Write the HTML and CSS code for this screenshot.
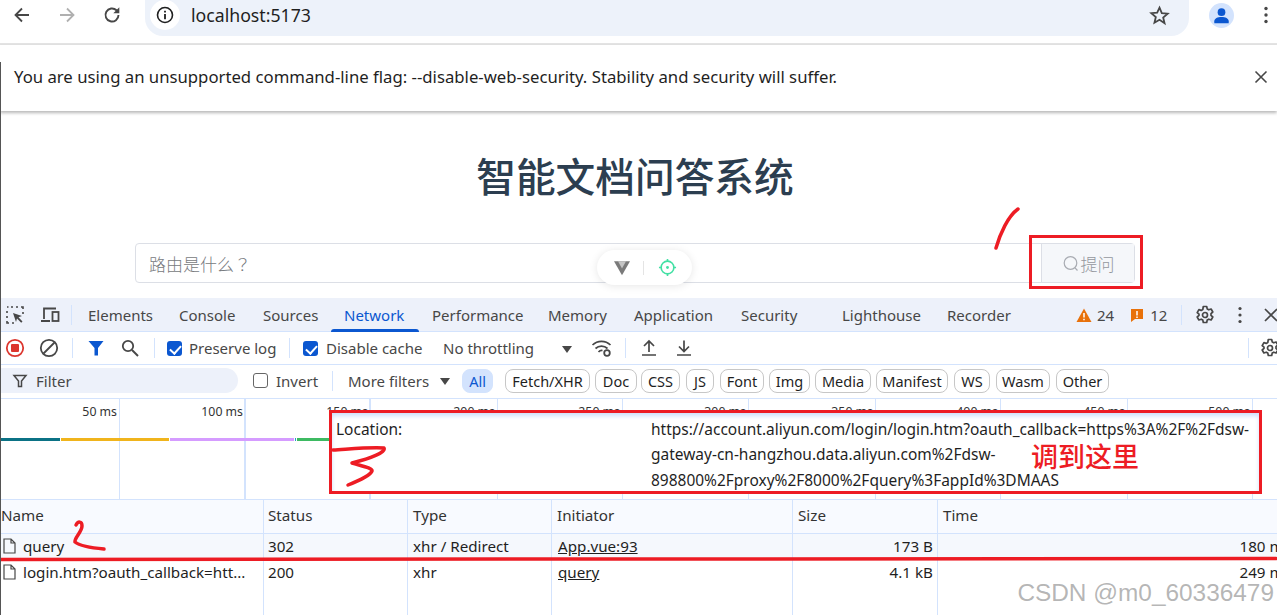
FILE: index.html
```html
<!DOCTYPE html>
<html lang="zh">
<head>
<meta charset="utf-8">
<title>智能文档问答系统</title>
<link rel="stylesheet" href="styles.css">
</head>
<body>
<div class="screen">
  <header class="chrome">
    <svg class="ic nav-back" viewBox="0 0 20 20"><path d="M17 10H4M10 3.500 3.500 10l6.500 6.500" fill="none" stroke="#474747" stroke-width="1.800"/></svg>
    <svg class="ic nav-fwd" viewBox="0 0 20 20"><path d="M3 10h13M10 3.500l6.500 6.500-6.500 6.500" fill="none" stroke="#b0b0b0" stroke-width="1.800"/></svg>
    <svg class="ic nav-reload" viewBox="0 0 20 20"><path d="M16.500 10a6.500 6.500 0 1 1-2-4.700L16.500 7.300" fill="none" stroke="#474747" stroke-width="1.900"/><path d="M17.300 2.300v6h-6z" fill="#474747"/></svg>
    <div class="omnibox">
      <span class="site-info"><svg class="ic" viewBox="0 0 20 20"><circle cx="10" cy="10" r="7.500" fill="none" stroke="#1f1f1f" stroke-width="1.600"/><path d="M10 9v5.200M10 5.700v1.700" stroke="#1f1f1f" stroke-width="1.800"/></svg></span>
      <span class="url">localhost:5173</span>
      <svg class="ic star" viewBox="0 0 20 20"><path d="m10 2.500 2.200 5.200 5.600.5-4.300 3.700 1.300 5.500L10 14l-4.800 2.900 1.300-5.500-4.300-3.700 5.600-.5z" fill="none" stroke="#474747" stroke-width="1.700"/></svg>
    </div>
    <span class="avatar"><svg viewBox="0 0 26 26"><circle cx="13" cy="9.500" r="4" fill="#0b57d0"/><path d="M5.500 21v-2c0-3 3.500-4.500 7.500-4.500s7.500 1.500 7.500 4.500v2z" fill="#0b57d0"/></svg></span>
    <svg class="ic kebab" viewBox="0 0 6 20"><circle cx="3" cy="3.500" r="1.700" fill="#474747"/><circle cx="3" cy="10" r="1.700" fill="#474747"/><circle cx="3" cy="16.500" r="1.700" fill="#474747"/></svg>
  </header>

  <div class="infobar">
    <span>You are using an unsupported command-line flag: --disable-web-security. Stability and security will suffer.</span>
    <svg class="ic info-close" viewBox="0 0 14 14"><path d="m1.500 1.500 11 11m0-11-11 11" stroke="#474747" stroke-width="1.600"/></svg>
  </div>

  <main class="page">
    <h1 class="title">智能文档问答系统</h1>
    <div class="ask">
      <div class="ask-input">路由是什么<span class="ask-q">？</span></div>
      <div class="ask-btn">
        <svg class="ask-icon" viewBox="0 0 18 18"><circle cx="8.500" cy="8" r="6.300" fill="none" stroke="#a8abb2" stroke-width="1.200"/><path d="m13 12.800 2.500 2.700" stroke="#a8abb2" stroke-width="1.200"/></svg>提问
      </div>
    </div>
  </main>

  <section class="devtools">
    <nav class="dt-tabs">
      <svg class="ic dt-inspect" viewBox="0 0 20 20"><path d="M2 2h1.500M6 2h2M11 2h2M16 2h2v2M2 6v2M2 11v2M2 16v2h2M7 18h2M18 7v2" stroke="#474747" stroke-width="1.600" fill="none"/><path d="m8 8 9 3-3.500 1.200 4 4.300-1.300 1.300-4.200-4.200L11 17z" fill="#474747"/></svg>
      <svg class="ic dt-device" viewBox="0 0 22 20"><path d="M5 14V3.500h12M2 16h9" stroke="#474747" stroke-width="1.800" fill="none"/><rect x="13.500" y="7" width="6" height="9" fill="none" stroke="#474747" stroke-width="1.800"/></svg>
      <span class="vsep tabs-sep"></span>
      <span class="tab t-elements">Elements</span>
      <span class="tab t-console">Console</span>
      <span class="tab t-sources">Sources</span>
      <span class="tab t-network active">Network</span>
      <span class="tab t-perf">Performance</span>
      <span class="tab t-memory">Memory</span>
      <span class="tab t-app">Application</span>
      <span class="tab t-security">Security</span>
      <span class="tab t-light">Lighthouse</span>
      <span class="tab t-recorder">Recorder</span>
      <span class="issues">
        <svg class="ic-s" viewBox="0 0 16 16"><path d="M8 1.500 15.500 15H.5z" fill="#e8710a"/><path d="M8 6v4.500M8 11.800v1.500" stroke="#fff" stroke-width="1.500"/></svg><span>24</span>
        <svg class="ic-s issue-b" viewBox="0 0 16 16"><path d="M2 2h12v10H6l-4 3z" fill="#e8710a"/><path d="M8 4v4.500M8 9.500V11" stroke="#fff" stroke-width="1.500"/></svg><span>12</span>
      </span>
      <span class="vsep issues-sep"></span>
      <svg class="ic gear-top" viewBox="0 0 20 20"><use href="#gear"/></svg>
      <svg class="ic dt-kebab" viewBox="0 0 6 20"><circle cx="3" cy="3.500" r="1.600" fill="#474747"/><circle cx="3" cy="10" r="1.600" fill="#474747"/><circle cx="3" cy="16.500" r="1.600" fill="#474747"/></svg>
      <svg class="ic dt-close" viewBox="0 0 14 14"><path d="m1 1 12 12m0-12L1 13" stroke="#474747" stroke-width="1.700"/></svg>
    </nav>

    <div class="dt-bar">
      <svg class="ic rec" viewBox="0 0 20 20"><circle cx="10" cy="10" r="8.200" fill="none" stroke="#dc362e" stroke-width="1.800"/><rect x="6" y="6" width="8" height="8" rx="1" fill="#dc362e"/></svg>
      <svg class="ic clear" viewBox="0 0 20 20"><circle cx="10" cy="10" r="8.200" fill="none" stroke="#474747" stroke-width="1.800"/><path d="M15.500 4.500l-11 11" stroke="#474747" stroke-width="1.800"/></svg>
      <span class="vsep bar-sep1"></span>
      <svg class="ic funnel" viewBox="0 0 18 18"><path d="M1.500 2h15l-5.500 7v7.500H7.500V9z" fill="#0b57d0"/></svg>
      <svg class="ic search" viewBox="0 0 20 20"><circle cx="8" cy="8" r="5.200" fill="none" stroke="#474747" stroke-width="1.800"/><path d="m12 12 6 6" stroke="#474747" stroke-width="2"/></svg>
      <span class="vsep bar-sep2"></span>
      <span class="check on c-preserve"></span><span class="lbl l-preserve">Preserve log</span>
      <span class="vsep bar-sep3"></span>
      <span class="check on c-cache"></span><span class="lbl l-cache">Disable cache</span>
      <span class="lbl l-throttle">No throttling</span>
      <span class="caret c-throttle"></span>
      <svg class="ic wifi" viewBox="0 0 22 20"><path d="M1.500 7a13 13 0 0 1 18 0M4.500 10.500a9 9 0 0 1 12 0M7.500 14a4.500 4.500 0 0 1 4-1.500" fill="none" stroke="#474747" stroke-width="1.700"/><circle cx="16" cy="15" r="2.800" fill="none" stroke="#474747" stroke-width="1.800"/></svg>
      <span class="vsep bar-sep4"></span>
      <svg class="ic up" viewBox="0 0 18 18"><path d="M9 13V2.500M4 7l5-5 5 5M2 16h14" fill="none" stroke="#474747" stroke-width="1.700"/></svg>
      <svg class="ic down" viewBox="0 0 18 18"><path d="M9 1.500V12M4 7.500l5 5 5-5M2 16h14" fill="none" stroke="#474747" stroke-width="1.700"/></svg>
      <span class="vsep bar-sep5"></span>
      <svg class="ic gear-bar" viewBox="0 0 20 20"><use href="#gear"/></svg>
    </div>

    <div class="dt-filter">
      <div class="filter-box">
        <svg class="ic-s" viewBox="0 0 16 16"><path d="M2 2.500h12L9.500 8v5.500h-3V8z" fill="none" stroke="#474747" stroke-width="1.500"/></svg>
        <span>Filter</span>
      </div>
      <span class="check c-invert"></span><span class="lbl l-invert">Invert</span>
      <span class="vsep filter-sep"></span>
      <span class="lbl l-more">More filters</span><span class="caret c-more"></span>
      <div class="chips">
        <span class="chip all">All</span>
        <span class="chip c1">Fetch/XHR</span>
        <span class="chip c2">Doc</span>
        <span class="chip c3">CSS</span>
        <span class="chip c4">JS</span>
        <span class="chip c5">Font</span>
        <span class="chip c6">Img</span>
        <span class="chip c7">Media</span>
        <span class="chip c8">Manifest</span>
        <span class="chip c9">WS</span>
        <span class="chip c10">Wasm</span>
        <span class="chip c11">Other</span>
      </div>
    </div>

    <div class="timeline">
      <div class="tl-cell">50 ms</div>
      <div class="tl-cell thick">100 ms</div>
      <div class="tl-cell thick">150 ms</div>
      <div class="tl-cell">200 ms</div>
      <div class="tl-cell">250 ms</div>
      <div class="tl-cell">300 ms</div>
      <div class="tl-cell">350 ms</div>
      <div class="tl-cell">400 ms</div>
      <div class="tl-cell">450 ms</div>
      <div class="tl-cell">500 ms</div>
      <div class="tl-bars">
        <span class="bar b-teal"></span><span class="bar b-yellow"></span><span class="bar b-purple"></span><span class="bar b-blue"></span><span class="bar b-green"></span>
      </div>
    </div>

    <div class="table">
      <div class="row head">
        <div class="cell">Name</div><div class="cell c-status">Status</div><div class="cell">Type</div><div class="cell">Initiator</div><div class="cell">Size</div><div class="cell">Time</div>
      </div>
      <div class="row even">
        <div class="cell name"><svg class="doc" viewBox="0 0 14 16"><path d="M1.500 1h7l4 4v10h-11z M8.500 1v4h4" fill="none" stroke="#474747" stroke-width="1.200"/></svg>query</div>
        <div class="cell c-status">302</div><div class="cell">xhr / Redirect</div><div class="cell link">App.vue:93</div><div class="cell right">173 B</div><div class="cell right time">180 ms</div>
      </div>
      <div class="row">
        <div class="cell name"><svg class="doc" viewBox="0 0 14 16"><path d="M1.500 1h7l4 4v10h-11z M8.500 1v4h4" fill="none" stroke="#474747" stroke-width="1.200"/></svg>login.htm?oauth_callback=htt...</div>
        <div class="cell c-status">200</div><div class="cell">xhr</div><div class="cell link">query</div><div class="cell right">4.1 kB</div><div class="cell right time">249 ms</div>
      </div>
      <div class="row filler">
        <div class="cell"></div><div class="cell"></div><div class="cell"></div><div class="cell"></div><div class="cell"></div><div class="cell"></div>
      </div>
    </div>
  </section>

  <div class="pill">
    <svg class="pill-vue" viewBox="0 0 22 20"><path d="M1 1.500h20L11 19z" fill="#7a7a7a"/><path d="M6 1.500h10l-5 9z" fill="#c4c4c4"/></svg>
    <span class="pill-sep"></span>
    <svg class="pill-target" viewBox="0 0 20 20"><circle cx="10" cy="10" r="6.700" fill="none" stroke="#42e0a4" stroke-width="1.700"/><circle cx="10" cy="10" r="1.500" fill="#42e0a4"/><path d="M10 1v3M10 16v3M1 10h3M16 10h3" stroke="#42e0a4" stroke-width="1.700"/></svg>
  </div>

  <div class="tooltip">
    <span class="tip-key">Location:</span>
    <span class="tip-val">https://account.aliyun.com/login/login.htm?oauth_callback=https%3A%2F%2Fdsw-<br>gateway-cn-hangzhou.data.aliyun.com%2Fdsw-<br>898800%2Fproxy%2F8000%2Fquery%3FappId%3DMAAS</span>
    <span class="tip-note">调到这里</span>
  </div>
  <div class="btn-mark"></div>

  <svg class="ink" viewBox="0 0 1277 615">
    <path d="M1018 209C1008 216 1000 234 996 248" />
    <path d="M333 450C350 449 370 447 384 448C386 452 372 458 352 463C362 466 373 468 372 471C370 476 358 481 348 485" />
    <path d="M76 525C78 521 82 521 82 526C82 532 74 538 75 542C80 546 92 548 104 549" />
    <path d="M1 559.500C300 559 900 559 1276 558.500" />
  </svg>

  <div class="watermark">CSDN @m0_60336479</div>

  <svg class="defs" width="0" height="0"><defs><g id="gear"><path d="M8.300 1.500h3.400l.5 2.400 1.600.9 2.300-.8 1.700 3-1.800 1.600v1.800l1.800 1.600-1.700 3-2.300-.8-1.600.9-.5 2.400H8.300l-.5-2.400-1.600-.9-2.300.8-1.700-3 1.800-1.600V9.200L2.200 7.600l1.700-3 2.300.8 1.600-.9z" fill="none" stroke="#474747" stroke-width="1.700" stroke-linejoin="round"/><circle cx="10" cy="10" r="2.500" fill="none" stroke="#474747" stroke-width="1.700"/></g></defs></svg>
</div>
</body>
</html>
```

FILE: styles.css
```css
* { box-sizing: border-box; }
html, body { margin: 0; padding: 0; background: #fff; overflow: hidden; }
body { font-family: "Noto Sans", "Noto Sans CJK SC", sans-serif; color: #1f1f1f; }
.screen { position: relative; width: 1277px; height: 615px; overflow: hidden; }
.screen::before { content: ""; position: absolute; left: 0; top: 62px; bottom: 0; width: 1px; background: #555; z-index: 2; }
.defs { position: absolute; }
.ic, .ic-s { display: block; flex: none; }

/* browser chrome */
.chrome { height: 45px; display: flex; align-items: center; border-bottom: 2px solid #e3e3e3; padding-bottom: 13px; }
.nav-back { width: 20px; height: 20px; margin-left: 12px; }
.nav-fwd { width: 20px; height: 20px; margin-left: 25px; }
.nav-reload { width: 20px; height: 20px; margin-left: 25px; }
.omnibox { margin-left: 23px; width: 1044px; height: 36px; align-self: flex-start; background: #edf2fa; border-radius: 0 0 18px 18px; display: flex; align-items: center; padding-left: 5px; }
.site-info { width: 30px; height: 30px; border-radius: 50%; background: #fff; display: flex; align-items: center; justify-content: center; margin-top: -6px; }
.site-info svg { width: 20px; height: 20px; }
.url { margin-left: 11px; font-size: 17.700px; color: #1f1f1f; margin-top: -6px; }
.star { width: 21px; height: 21px; margin-left: auto; margin-right: 19px; margin-top: -6px; }
.avatar { width: 25px; height: 25px; margin-left: 20px; border-radius: 50%; background: #d3e3fd; }
.avatar svg { display: block; width: 25px; height: 25px; }
.kebab { width: 6px; height: 20px; margin-left: 29px; }

.infobar { height: 66px; display: flex; align-items: center; justify-content: space-between; padding: 0 9px 3px 14px; font-size: 16.730px; color: #1f1f1f; box-shadow: 0 2px 3px rgba(0,0,0,.28); position: relative; }
.info-close { width: 14px; height: 14px; }

/* page */
.page { height: 187px; padding: 41px 7px 0 0; }
.title { margin: 0; text-align: center; font-family: "Noto Sans CJK SC", sans-serif; font-size: 39.700px; line-height: 46px; font-weight: 500; color: #2c3e50; }
.ask { margin: 45px 0 0 135px; width: 1000px; height: 40px; display: flex; border: 1px solid #dcdfe6; border-radius: 4px; font-family: "Noto Sans CJK SC", sans-serif; font-size: 17px; font-weight: 300; color: #777a80; }
.ask-input { flex: 1; display: flex; align-items: center; padding-left: 13px; }
.ask-q { font-family: "Noto Sans CJK TC", sans-serif; }
.ask-btn { width: 93px; display: flex; align-items: center; justify-content: center; background: #f5f7fa; border-left: 1px solid #dcdfe6; color: #94979e; }
.ask-icon { width: 18px; height: 18px; margin-right: 1px; margin-top: 1px; }

/* devtools */
.devtools { font-size: 15px; color: #1f1f1f; }
.vsep { display: block; flex: none; width: 1px; height: 20px; background: #d3e3fd; }
.lbl { flex: none; }
.dt-tabs { height: 34px; background: #edf1fa; border-bottom: 1px solid #d3e3fd; display: flex; align-items: center; color: #474747; white-space: nowrap; }
.dt-inspect { width: 20px; height: 20px; margin-left: 5px; }
.dt-device { width: 22px; height: 20px; margin-left: 14px; }
.tabs-sep { margin-left: 10px; }
.tab { position: relative; line-height: 32px; flex: none; }
.t-elements { margin-left: 16px; width: 91px; }
.t-console { width: 84px; }
.t-sources { width: 81px; }
.t-network { width: 88px; color: #0b57d0; }
.t-network::after { content: ""; position: absolute; left: -13px; top: 30px; width: 88px; height: 3px; background: #0b57d0; border-radius: 3px 3px 0 0; }
.t-perf { width: 116px; }
.t-memory { width: 86px; }
.t-app { width: 107px; }
.t-security { width: 101px; }
.t-light { width: 105px; }
.t-recorder { width: 129px; }
.issues { display: flex; align-items: center; gap: 5px; flex: none; }
.ic-s { width: 16px; height: 16px; }
.issue-b { margin-left: 10px; }
.issues-sep { margin-left: 14px; }
.gear-top { width: 20px; height: 20px; margin-left: 13px; }
.dt-kebab { width: 6px; height: 20px; margin-left: 22px; }
.dt-close { width: 14px; height: 14px; margin-left: 21px; }

.dt-bar { height: 33px; border-bottom: 1px solid #d3e3fd; display: flex; align-items: center; white-space: nowrap; color: #474747; }
.rec { width: 20px; height: 20px; margin-left: 5px; }
.clear { width: 20px; height: 20px; margin-left: 14px; }
.bar-sep1 { margin-left: 13px; }
.funnel { width: 18px; height: 18px; margin-left: 14px; }
.search { width: 20px; height: 20px; margin-left: 15px; }
.bar-sep2 { margin-left: 14px; }
.check { display: block; flex: none; width: 15px; height: 15px; border: 1.500px solid #666; border-radius: 3px; background: #fff; }
.check.on { border: 0; background: #0b57d0; position: relative; }
.check.on::after { content: ""; position: absolute; left: 5px; top: 2px; width: 5px; height: 9px; border: solid #fff; border-width: 0 2px 2px 0; transform: rotate(42deg); }
.c-preserve { margin-left: 12px; }
.l-preserve { margin-left: 7px; width: 92px; }
.bar-sep3 { margin-left: 8px; }
.c-cache { margin-left: 13px; }
.l-cache { margin-left: 8px; width: 100px; }
.l-throttle { margin-left: 17px; width: 100px; }
.caret { display: block; flex: none; width: 0; height: 0; border: solid transparent; border-width: 7px 5px 0; border-top-color: #474747; margin-top: 2px; }
.c-throttle { margin-left: 19px; }
.wifi { width: 22px; height: 20px; margin-left: 19px; }
.bar-sep4 { margin-left: 12px; }
.up { width: 18px; height: 18px; margin-left: 14px; }
.down { width: 18px; height: 18px; margin-left: 17px; }
.bar-sep5 { margin-left: 555px; }
.gear-bar { width: 20px; height: 20px; margin-left: 11px; }

.dt-filter { height: 34px; border-bottom: 1px solid #d3e3fd; padding-bottom: 2px; display: flex; align-items: center; white-space: nowrap; color: #474747; }
.filter-box { width: 238px; height: 25px; background: #edf1fa; border-radius: 0 13px 13px 0; display: flex; align-items: center; padding-left: 12px; gap: 8px; }
.c-invert { margin-left: 15px; }
.l-invert { margin-left: 8px; width: 42px; }
.filter-sep { margin-left: 14px; }
.l-more { margin-left: 15px; width: 85px; }
.c-more { margin-left: 7px; }
.chips { margin-left: 12px; display: flex; color: #1f1f1f; font-size: 14.500px; }
.chip { height: 24px; line-height: 22px; border: 1px solid #c7c7c7; border-radius: 8px; text-align: center; flex: none; }
.chip.all { width: 31px; background: #d3e3fd; border-color: #d3e3fd; color: #0b57d0; }
.c1 { width: 85px; margin-left: 12px; }
.c2 { width: 42px; margin-left: 5px; }
.c3 { width: 39px; margin-left: 4px; }
.c4 { width: 28px; margin-left: 6px; }
.c5 { width: 44px; margin-left: 6px; }
.c6 { width: 41px; margin-left: 5px; }
.c7 { width: 56px; margin-left: 5px; }
.c8 { width: 72px; margin-left: 5px; }
.c9 { width: 36px; margin-left: 6px; }
.c10 { width: 54px; margin-left: 6px; }
.c11 { width: 53px; margin-left: 6px; }

.timeline { position: relative; height: 101px; display: grid; grid-template-columns: 120px 126px 125px 127px 125px 126px 127px 125px 127px 125px 1fr; border-bottom: 1px solid #d3e3fd; font-size: 12.300px; }
.tl-cell { border-right: 1px solid #d3e3fd; text-align: right; padding: 4px 2px 0 0; color: #333; }
.tl-cell.thick { border-right-width: 2px; padding-right: 1px; }
.tl-bars { position: absolute; left: 1px; top: 39px; display: flex; height: 3px; gap: 1px; }
.bar { display: block; height: 3px; }
.b-teal { width: 59px; background: #0b7285; }
.b-yellow { width: 108px; background: #f0b41c; }
.b-purple { width: 124px; background: #d59cff; }
.b-blue { width: 1px; background: #21a1c4; }
.b-green { width: 40px; background: #3dba62; }

.table { font-size: 15.200px; }
.row { display: grid; grid-template-columns: 264px 144px 144px 241px 145px 1fr; height: 26px; }
.row.head { height: 34px; background: #f8faff; border-bottom: 1px solid #d3e3fd; }
.row.even { background: #f5f8fd; }
.row.filler { height: 30px; }
.cell { border-right: 1px solid #d3e3fd; padding: 0 4px 2px 5px; display: flex; align-items: center; white-space: nowrap; overflow: hidden; }
.cell:last-child { border-right: 0; }
.head .cell { color: #333; padding-bottom: 4px; }
.cell:first-child { padding-left: 1px; }
.cell.name { padding-left: 2px; }
.cell.c-status { padding-left: 4px; }
.doc { width: 15px; height: 16px; margin-right: 6px; flex: none; }
.cell.link { text-decoration: underline; padding-left: 6px; }
.cell.right { justify-content: flex-end; }
.cell.time { overflow: visible; padding-right: 0; margin-right: -14px; }

/* floating pieces */
.pill { position: absolute; left: 597px; top: 250px; width: 95px; height: 35px; background: #fff; border-radius: 18px; box-shadow: 0 1px 8px rgba(0,0,0,.1); display: flex; align-items: center; padding-left: 16px; }
.pill-vue { width: 18px; height: 16px; }
.pill-sep { width: 1px; height: 14px; background: #e4e4e4; margin-left: 12px; }
.pill-target { width: 19px; height: 19px; margin-left: 14px; }
.tooltip { position: absolute; left: 329px; top: 410px; width: 933px; height: 84px; background: #fff; border: 3px solid #ed1c24; padding: 4px 0 0 4px; display: flex; font-size: 15.480px; line-height: 25.400px; box-shadow: inset 0 3px 4px #cfe0fb; color: #1f1f1f; }
.tip-key { width: 315px; flex: none; }
.tip-val { white-space: nowrap; }
.tip-note { position: absolute; left: 699px; top: 26px; font-family: "Noto Sans CJK SC", sans-serif; font-size: 27px; line-height: 34px; color: #ed1c24; font-weight: 500; }
.btn-mark { position: absolute; left: 1029px; top: 235px; width: 114px; height: 54px; border: 3px solid #ed1c24; }
.ink { position: absolute; left: 0; top: 0; width: 1277px; height: 615px; fill: none; stroke: #ed1c24; stroke-width: 3.500px; stroke-linecap: round; stroke-linejoin: round; pointer-events: none; }
.watermark { position: absolute; right: 3px; top: 578px; font-family: "Liberation Sans", sans-serif; font-size: 24.400px; line-height: 30px; color: rgba(150,150,150,.7); text-shadow: 1px 1px 1px rgba(255,255,255,.7); white-space: nowrap; }
```
